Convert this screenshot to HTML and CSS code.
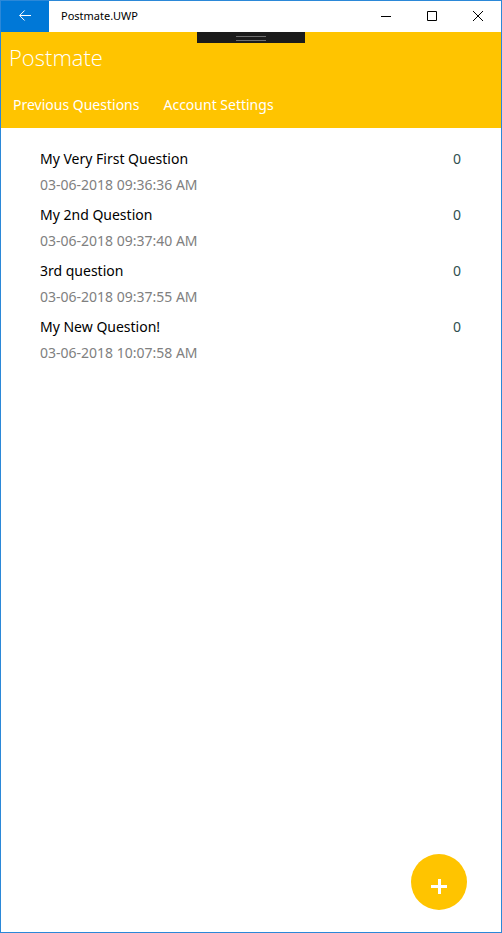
FILE: index.html
```html
<!DOCTYPE html>
<html lang="en">
<head>
<meta charset="utf-8">
<meta name="viewport" content="width=device-width, initial-scale=1">
<title>Postmate.UWP</title>
<link rel="stylesheet" href="styles.css">
</head>
<body>
<div class="window">
  <div class="titlebar">
    <button class="back" type="button" aria-label="Back">
      <svg width="12" height="11" viewBox="0 0 12 11"><path d="M12 5.5H.8M5.6.5l-5 5 5 5"/></svg>
    </button>
    <span class="caption">Postmate.UWP</span>
    <button class="control" type="button" aria-label="Minimize">
      <svg width="10" height="10" viewBox="0 0 10 10"><path d="M0 5.5h10"/></svg>
    </button>
    <button class="control" type="button" aria-label="Maximize">
      <svg width="10" height="10" viewBox="0 0 10 10"><path d="M.5.5h9v9h-9z"/></svg>
    </button>
    <button class="control" type="button" aria-label="Close">
      <svg width="10" height="10" viewBox="0 0 10 10"><path d="M0 0l10 10M10 0L0 10"/></svg>
    </button>
  </div>
  <header class="header">
    <button class="debug-handle" type="button" aria-label="Debug toolbar"></button>
    <h1 class="title">Postmate</h1>
    <nav class="tabs">
      <a class="tab" href="#previous">Previous Questions</a>
      <a class="tab" href="#account">Account Settings</a>
    </nav>
  </header>
  <main class="content" id="previous">
    <ul class="questions">
      <li class="question">
        <span class="name">My Very First Question</span><span class="count">0</span>
        <time class="date">03-06-2018 09:36:36 AM</time>
      </li>
      <li class="question">
        <span class="name">My 2nd Question</span><span class="count">0</span>
        <time class="date">03-06-2018 09:37:40 AM</time>
      </li>
      <li class="question">
        <span class="name">3rd question</span><span class="count">0</span>
        <time class="date">03-06-2018 09:37:55 AM</time>
      </li>
      <li class="question">
        <span class="name">My New Question!</span><span class="count">0</span>
        <time class="date">03-06-2018 10:07:58 AM</time>
      </li>
    </ul>
  </main>
  <button class="add" type="button" aria-label="Add question">
    <svg width="16" height="16" viewBox="0 0 16 16"><path d="M0 8.5h16M8.5 1v15"/></svg>
  </button>
</div>
</body>
</html>
```
FILE: styles.css
```css
* { box-sizing: border-box; }

body {
  margin: 0;
  background: #fff;
  color: #000;
  font: 14px/26px "Noto Sans", "Open Sans", sans-serif;
}

button {
  margin: 0;
  padding: 0;
  border: 0;
  font: inherit;
}

svg { display: block; fill: none; stroke: currentColor; }

.window {
  position: relative;
  display: flex;
  flex-direction: column;
  min-height: 100vh;
  border: 1px solid #2b88d8;
}

.titlebar { display: flex; height: 31px; }

.back,
.control {
  display: flex;
  align-items: center;
  justify-content: center;
}

.back { width: 48px; padding-bottom: 2px; background: #0078d7; color: #fff; }
.control { width: 46px; padding-bottom: 1px; background: #fff; color: #000; }

.caption {
  flex: 1;
  padding-left: 12px;
  font-size: 11px;
  line-height: 30px;
}

.header {
  position: relative;
  background: #ffc400;
  color: #fff;
}

.debug-handle {
  position: absolute;
  top: 0;
  left: 50%;
  display: flex;
  width: 108px;
  height: 11px;
  transform: translateX(-50%);
  background: #1b1b1b;
}

.debug-handle::before {
  content: "";
  width: 30px;
  height: 3px;
  margin: 4px auto;
  border: solid #6e6e6e;
  border-width: 1px 0;
}

.title {
  margin: 0;
  padding: 0 8px;
  font-family: "Open Sans", "Noto Sans", sans-serif;
  font-size: 22px;
  font-weight: 300;
  line-height: 50px;
}

.tabs { display: flex; }

.tab {
  padding: 0 12px;
  color: inherit;
  line-height: 46px;
  text-decoration: none;
}

.content { flex: 1; padding: 18px 40px 0 39px; }

.questions {
  display: grid;
  gap: 4px;
  margin: 0;
  padding: 0;
  list-style: none;
}

.question { display: grid; grid-template-columns: 1fr auto; }
.count { color: #2f4f4f; }
.date { color: #808080; }

.add {
  position: absolute;
  right: 34px;
  bottom: 22px;
  display: flex;
  align-items: center;
  justify-content: center;
  width: 56px;
  height: 56px;
  padding-top: 8px;
  border-radius: 50%;
  background: #ffc400;
  color: #fff;
}

.add svg { stroke-width: 3; }
```
